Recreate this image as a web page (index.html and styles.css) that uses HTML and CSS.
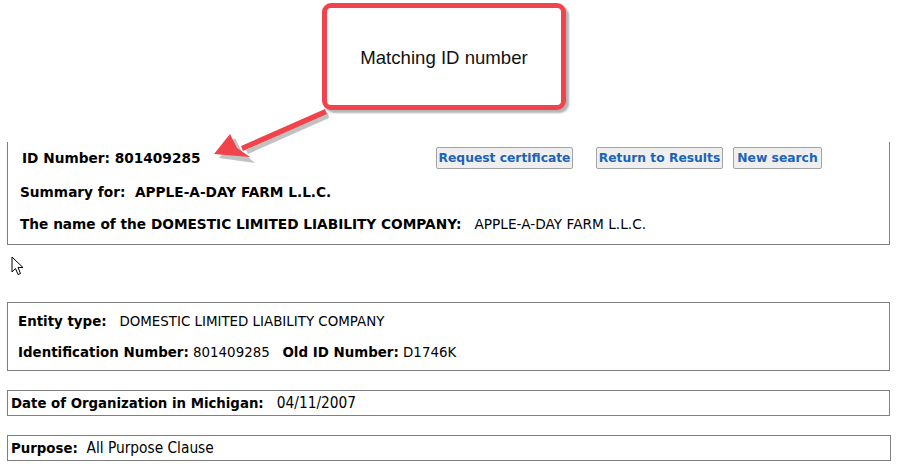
FILE: index.html
```html
<!DOCTYPE html>
<html>
	<head>
		<meta charset="utf-8">
		<title>Summary for APPLE-A-DAY FARM L.L.C.</title>
		<link rel="stylesheet" href="styles.css">
	</head>
	<body>
		<div class="top-space"></div>

		<div class="box box-main">
			<div class="id-row">
				<span class="id-label">ID Number: 801409285</span>
				<span class="btn btn-request">Request certificate</span>
				<span class="btn btn-return">Return to Results</span>
				<span class="btn btn-new">New search</span>
			</div>
			<div class="line line-summary"><b>Summary for:&nbsp; APPLE-A-DAY FARM L.L.C.</b></div>
			<div class="line line-name"><b>The name of the DOMESTIC LIMITED LIABILITY COMPANY:</b>&nbsp;&nbsp; APPLE-A-DAY FARM L.L.C.</div>
		</div>

		<div class="box box-entity">
			<div class="line"><b>Entity type:</b>&nbsp;&nbsp; DOMESTIC LIMITED LIABILITY COMPANY</div>
			<div class="line line-ident"><b>Identification Number:</b> 801409285&nbsp;&nbsp; <b>Old ID Number:</b> D1746K</div>
		</div>

		<div class="box box-small">
			<div class="line"><b>Date of Organization in Michigan:</b>&nbsp;&nbsp; 04/11/2007</div>
		</div>

		<div class="box box-small box-purpose">
			<div class="line"><b>Purpose:</b>&nbsp; All Purpose Clause</div>
		</div>

		<!-- annotation drawn over the page -->
		<div class="callout">Matching ID number</div>
		<svg class="arrow" width="130" height="70" viewBox="0 0 130 70">
			<g transform="translate(3,3)" fill="#9a9a9a" opacity="0.6">
				<path d="M124 6 L42 43 L44 47 L125 11 Z"/>
				<path d="M15 51 L31 31 L38 45 L51 56 Z"/>
			</g>
			<path d="M124 5 L40 42 L42 47 L126 10 Z" fill="#f0434c"/>
			<path d="M13 50 L29 30 L36 44 L49 53 Z" fill="#f0434c"/>
		</svg>
		<svg class="cursor" width="14" height="20" viewBox="0 0 14 20">
			<path d="M1 1 L1 16 L4.5 12.5 L7 18.5 L9.5 17.5 L7 11.5 L12 11.5 Z" fill="#fff" stroke="#000" stroke-width="1" stroke-linejoin="round"/>
		</svg>
	</body>
</html>
```

FILE: styles.css
```css
body {
	margin: 0;
	position: relative;
	font-family: "DejaVu Sans", Verdana, sans-serif;
	font-size: 13.7px;
	color: #000;
	background: #fff;
}
.top-space {
	height: 142px;
}
.box {
	margin-left: 7px;
	width: 883px;
	box-sizing: border-box;
	border: 1px solid #808080;
}
.line {
	line-height: 16px;
	white-space: nowrap;
}
.box-main {
	border-top: none;
	padding: 5px 12px 12px 12px;
}
.id-row {
	display: flex;
	align-items: center;
	height: 22px;
}
.id-label {
	font-weight: bold;
	margin-left: 2px;
	width: 414px;
}
.btn {
	display: inline-flex;
	align-items: center;
	justify-content: center;
	height: 22px;
	box-sizing: border-box;
	border: 1px solid #a3a3a3;
	border-radius: 2px;
	background: #efefef;
	color: #1a63b8;
	font-weight: bold;
	font-size: 12.3px;
	white-space: nowrap;
}
.btn-request {
	width: 137px;
}
.btn-return {
	width: 127px;
	margin-left: 23px;
}
.btn-new {
	width: 89px;
	margin-left: 10px;
}
.line-summary {
	margin-top: 15px;
}
.line-name {
	margin-top: 16px;
}
.box-entity {
	margin-top: 57px;
	padding: 11px 10px 9px 10px;
	font-size: 13.4px;
}
.line-ident {
	margin-top: 15px;
}
.box-small {
	margin-top: 19px;
	padding: 4px 3px;
	font-family: "DejaVu Sans Condensed", "DejaVu Sans", sans-serif;
	font-size: 15.3px;
}
.box-small b {
	font-size: 14.8px;
}
.box-purpose {
	width: 884px;
}
.callout {
	position: absolute;
	left: 322px;
	top: 3px;
	width: 244px;
	height: 107px;
	box-sizing: border-box;
	border: 5px solid #f0434c;
	border-radius: 9px;
	background: #fff;
	box-shadow: 3px 3px 2px rgba(120, 120, 120, 0.55);
	display: flex;
	justify-content: center;
	padding-top: 39px;
	font-family: "Liberation Sans", Arial, sans-serif;
	font-size: 18.6px;
	color: #111;
}
.arrow {
	position: absolute;
	left: 201px;
	top: 104px;
}
.cursor {
	position: absolute;
	left: 11px;
	top: 256px;
}
```
